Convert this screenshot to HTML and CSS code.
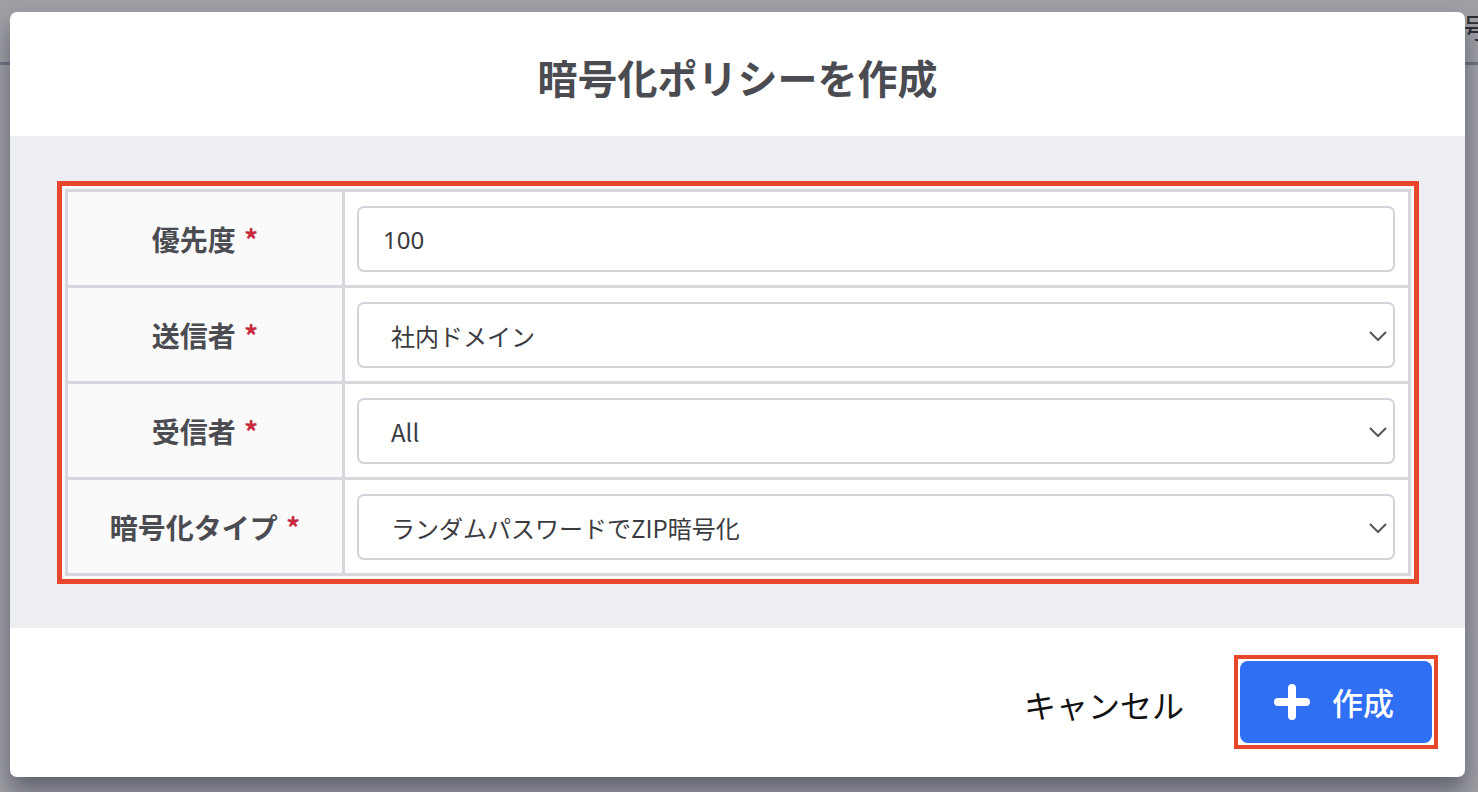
FILE: index.html
```html
<html>

<head>
  <meta charset="utf-8">
  <meta name="viewport" content="width=device-width, initial-scale=1.0">
  <link rel="stylesheet" href="styles.css">
</head>

<body>
  <span class="behind">号</span>
  <div class="modal">
    <div class="modal-head">
      <h1>暗号化ポリシーを作成</h1>
    </div>
    <div class="modal-body">
      <div class="mark">
        <table class="form">
          <tr>
            <th>優先度 <em>*</em></th>
            <td><input class="field" value="100"></td>
          </tr>
          <tr>
            <th>送信者 <em>*</em></th>
            <td>
              <div class="pick">
                <select class="field sel">
                  <option>社内ドメイン</option>
                </select>
                <svg class="chev" width="18" height="10" viewBox="0 0 18 10"><path d="M1 1l8 8 8-8" fill="none" stroke="#54565c" stroke-width="2"/></svg>
              </div>
            </td>
          </tr>
          <tr>
            <th>受信者 <em>*</em></th>
            <td>
              <div class="pick">
                <select class="field sel">
                  <option>All</option>
                </select>
                <svg class="chev" width="18" height="10" viewBox="0 0 18 10"><path d="M1 1l8 8 8-8" fill="none" stroke="#54565c" stroke-width="2"/></svg>
              </div>
            </td>
          </tr>
          <tr>
            <th>暗号化タイプ <em>*</em></th>
            <td>
              <div class="pick">
                <select class="field sel">
                  <option>ランダムパスワードでZIP暗号化</option>
                </select>
                <svg class="chev" width="18" height="10" viewBox="0 0 18 10"><path d="M1 1l8 8 8-8" fill="none" stroke="#54565c" stroke-width="2"/></svg>
              </div>
            </td>
          </tr>
        </table>
      </div>
    </div>
    <div class="modal-foot">
      <a class="cancel">キャンセル</a>
      <span class="mark-btn">
        <button class="create">
          <svg width="36" height="36" viewBox="0 0 36 36"><path d="M18 4v28M4 18h28" stroke="#fff" stroke-width="8" stroke-linecap="round"/></svg>
          <span>作成</span>
        </button>
      </span>
    </div>
  </div>
</body>

</html>
```

FILE: styles.css
```css
html,
body {
  margin: 0;
  padding: 0;
}

body {
  width: 1478px;
  height: 792px;
  overflow: hidden;
  position: relative;
  background: linear-gradient(#6f7380, #6f7380) 0 62px / 100% 3px no-repeat, #9fa0a5;
  font-family: "Noto Sans CJK JP", "Noto Sans", sans-serif;
}

.behind {
  position: absolute;
  top: 9px;
  left: 1462px;
  font-size: 28px;
  line-height: 36px;
  color: #2a2c31;
}

.modal {
  position: relative;
  display: flex;
  flex-direction: column;
  margin: 12px 0 0 10px;
  width: 1455px;
  height: 765px;
  background: #fff;
  border-radius: 7px;
  overflow: hidden;
  box-shadow: 0 14px 22px rgba(45, 50, 70, 0.55);
}

.modal-head {
  height: 124px;
  display: flex;
  align-items: center;
  justify-content: center;
  padding-top: 6px;
  box-sizing: border-box;
}

h1 {
  margin: 0;
  font-size: 40px;
  font-weight: bold;
  color: #4b4c52;
}

.modal-body {
  background: #edeef2;
  padding: 45px 46px 44px 47px;
}

.mark {
  border: 5px solid #e9472c;
  padding: 3px;
  background: #f8f8fa;
}

.form {
  width: 100%;
  border-collapse: collapse;
  border: 2px solid #d6d8dd;
}

.form th,
.form td {
  border: 3px solid #d6d8dd;
  height: 96px;
  box-sizing: border-box;
  padding: 0;
}

.form th {
  width: 277px;
  background: #fafafa;
  font-size: 28px;
  font-weight: bold;
  color: #4b4c52;
  text-align: center;
}

.form th em {
  font-style: normal;
  color: #c9283f;
  margin-left: 2px;
}

.form td {
  background: #fff;
  padding: 0 13px 0 12px;
}

.field {
  display: block;
  width: 100%;
  height: 66px;
  box-sizing: border-box;
  border: 2px solid #d0d3d9;
  border-radius: 7px;
  background: #fff;
  outline: none;
  padding: 2px 24px 0;
  font-family: "Noto Sans", "Noto Sans CJK JP", sans-serif;
  font-size: 24px;
  color: #3a3b40;
}

.pick {
  position: relative;
}

.sel {
  appearance: none;
  -webkit-appearance: none;
  padding: 2px 32px 0;
  font-family: "Noto Sans CJK JP", "Noto Sans", sans-serif;
}

.chev {
  position: absolute;
  right: 8px;
  top: 29px;
}

.modal-foot {
  flex: 1;
  display: flex;
  align-items: center;
  justify-content: flex-end;
  padding-right: 27px;
}

.cancel {
  font-size: 32px;
  color: #111;
  margin-right: 50px;
  margin-top: 3px;
  cursor: pointer;
}

.mark-btn {
  display: block;
  border: 4px solid #e9472c;
  padding: 2px;
  background: #fff;
  margin-top: -2px;
}

.create {
  display: flex;
  align-items: center;
  justify-content: center;
  gap: 22px;
  width: 192px;
  height: 82px;
  border: none;
  border-radius: 8px;
  background: #2f6ff4;
  color: #fff;
  font-family: "Noto Sans CJK JP", sans-serif;
  font-size: 31px;
  font-weight: 500;
  padding: 0 4px 0 0;
  cursor: pointer;
}
```
